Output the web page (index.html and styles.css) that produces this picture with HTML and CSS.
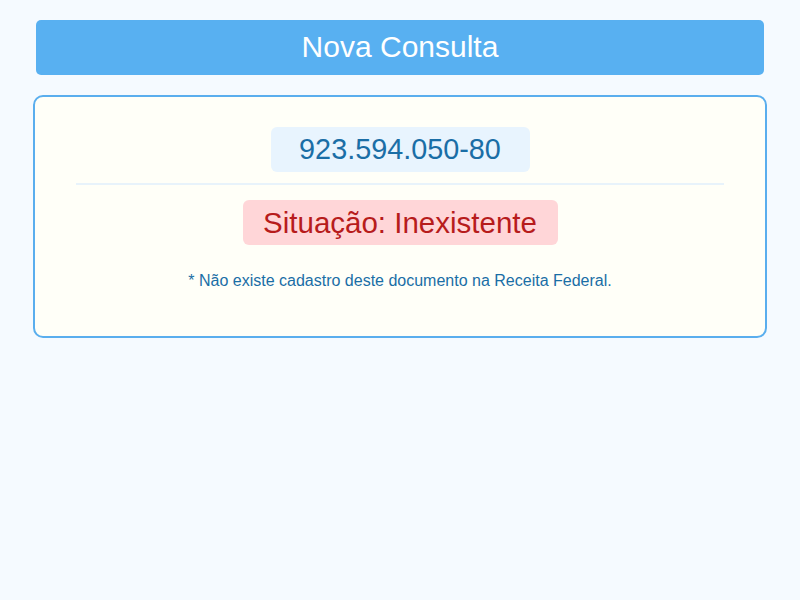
FILE: index.html
```html
<!DOCTYPE html>
<html lang="pt-BR">
<head>
<meta charset="utf-8">
<title>Nova Consulta</title>
<link rel="stylesheet" href="styles.css">
</head>
<body>
<div class="page">
  <button class="new-query">Nova Consulta</button>
  <div class="card">
    <div class="doc">923.594.050-80</div>
    <hr class="sep">
    <div class="status">Situação: Inexistente</div>
    <p class="note">* Não existe cadastro deste documento na Receita Federal.</p>
  </div>
</div>
</body>
</html>
```

FILE: styles.css
```css
html, body {
  margin: 0;
  padding: 0;
  background: #f5faff;
  font-family: "Liberation Sans", Arial, sans-serif;
}
.page {
  width: 734px;
  margin: 0 auto;
  padding-top: 20px;
  display: flex;
  flex-direction: column;
  align-items: center;
}
.new-query {
  width: 728px;
  height: 55px;
  border: none;
  border-radius: 5px;
  background: #58b0f1;
  color: #ffffff;
  font-family: "Liberation Sans", Arial, sans-serif;
  font-size: 30px;
  padding: 0 0 2px;
  margin: 0 0 20px;
}
.card {
  box-sizing: border-box;
  width: 734px;
  height: 243px;
  border: 2px solid #5aaeee;
  border-radius: 10px;
  background: #fffff8;
  padding: 30px 41px 0;
  display: flex;
  flex-direction: column;
  align-items: center;
}
.doc {
  box-sizing: border-box;
  width: 259px;
  height: 45px;
  line-height: 45px;
  text-align: center;
  background: #e8f4fe;
  border-radius: 6px;
  color: #1a6ea6;
  font-size: 28.8px;
}
.sep {
  width: 100%;
  border: none;
  height: 2px;
  background: #e8f3fb;
  margin: 11px 0 15px;
}
.status {
  box-sizing: border-box;
  width: 315px;
  height: 45px;
  line-height: 45px;
  text-align: center;
  background: #ffd6d8;
  border-radius: 6px;
  color: #b71c1c;
  font-size: 29.5px;
}
.note {
  margin: 27px 0 0;
  color: #1a6ea6;
  font-size: 16px;
}
```
